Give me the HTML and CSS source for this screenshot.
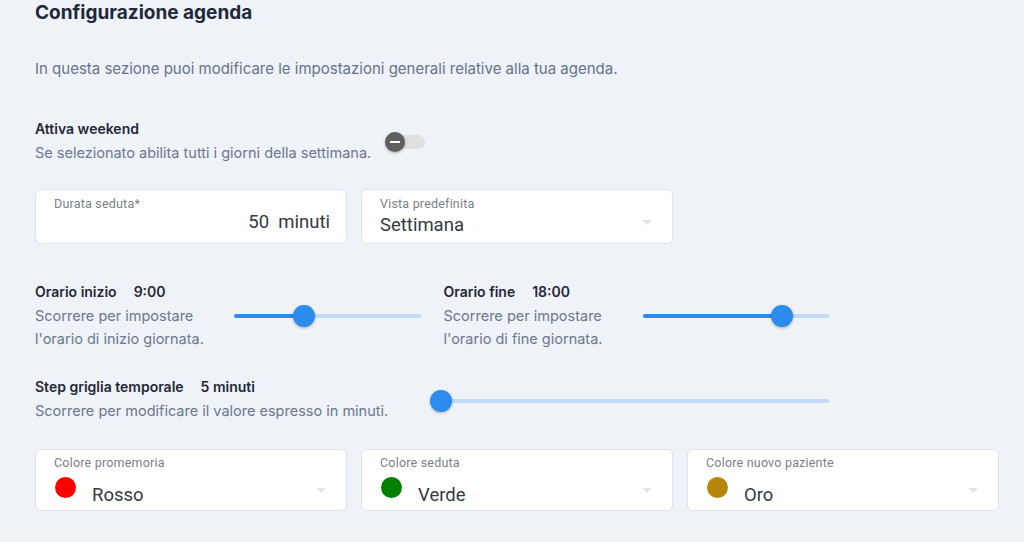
FILE: index.html
```html
<!DOCTYPE html>
<html>

<head>
	<meta charset="utf-8">
	<title>Configurazione agenda</title>
	<link rel="stylesheet" href="styles.css">
</head>

<body>
	<div id="page">
		<h1>Configurazione agenda</h1>
		<p class="intro">In questa sezione puoi modificare le impostazioni generali relative alla tua agenda.</p>

		<div class="weekend">
			<div>
				<div class="lbl">Attiva weekend</div>
				<div class="desc">Se selezionato abilita tutti i giorni della settimana.</div>
			</div>
			<div class="switch"><span class="knob"></span></div>
		</div>

		<div class="fields">
			<div class="field">
				<span class="flabel">Durata seduta*</span>
				<div class="fvalue right">50&nbsp;&nbsp;minuti</div>
			</div>
			<div class="field">
				<span class="flabel">Vista predefinita</span>
				<div class="fvalue">Settimana</div>
				<span class="arrow"></span>
			</div>
		</div>

		<div class="hours">
			<div class="hour">
				<div class="htext">
					<div class="lbl">Orario inizio<b>9:00</b></div>
					<div class="desc">Scorrere per impostare<br>l'orario di inizio giornata.</div>
				</div>
				<div class="slider">
					<div class="fill" style="width: 37.5%"></div>
					<span class="thumb" style="left: 37.5%"></span>
				</div>
			</div>
			<div class="hour">
				<div class="htext">
					<div class="lbl">Orario fine<b>18:00</b></div>
					<div class="desc">Scorrere per impostare<br>l'orario di fine giornata.</div>
				</div>
				<div class="slider">
					<div class="fill" style="width: 75%"></div>
					<span class="thumb" style="left: 75%"></span>
				</div>
			</div>
		</div>

		<div class="step">
			<div class="stext">
				<div class="lbl">Step griglia temporale<b>5 minuti</b></div>
				<div class="desc">Scorrere per modificare il valore espresso in minuti.</div>
			</div>
			<div class="slider">
				<div class="fill" style="width: 0%"></div>
				<span class="thumb" style="left: 0%"></span>
			</div>
		</div>

		<div class="colors">
			<div class="field tall">
				<span class="flabel">Colore promemoria</span>
				<div class="cvalue"><span class="dot red"></span>Rosso</div>
				<span class="arrow"></span>
			</div>
			<div class="field tall">
				<span class="flabel">Colore seduta</span>
				<div class="cvalue"><span class="dot green"></span>Verde</div>
				<span class="arrow"></span>
			</div>
			<div class="field tall">
				<span class="flabel">Colore nuovo paziente</span>
				<div class="cvalue"><span class="dot gold"></span>Oro</div>
				<span class="arrow"></span>
			</div>
		</div>
	</div>
</body>

</html>
```

FILE: styles.css
```css
body {
	margin: 0;
	background-color: #eff2f7;
	font-family: Inter, "Noto Sans", sans-serif;
	color: #1f2937;
}

#page {
	padding: 0 24px 0 35px;
}

h1 {
	margin: 0;
	font-size: 19px;
	line-height: 26px;
	font-weight: 700;
	color: #1e293b;
}

.intro {
	margin: 33px 0 0 0;
	font-size: 15px;
	line-height: 20px;
	color: #64748b;
}

.lbl {
	font-size: 14px;
	line-height: 20px;
	font-weight: 600;
	color: #1f2937;
	margin-bottom: 2px;
}

.lbl b {
	font-weight: 600;
	margin-left: 17px;
}

.desc {
	font-size: 14.5px;
	line-height: 23px;
	color: #6b7890;
}

.weekend {
	display: flex;
	align-items: center;
	gap: 14px;
	margin-top: 40px;
}

.switch {
	position: relative;
	width: 30px;
	height: 14px;
	margin-left: 10px;
	border-radius: 7px;
	background-color: #e0e0e0;
}

.knob {
	position: absolute;
	left: -10px;
	top: -3px;
	width: 20px;
	height: 20px;
	border-radius: 50%;
	background-color: #5f5f5f;
	box-shadow: 0 1px 3px rgba(0, 0, 0, 0.3);
}

.knob::after {
	content: "";
	position: absolute;
	left: 5px;
	top: 9px;
	width: 10px;
	height: 2px;
	background-color: #fff;
}

.fields {
	display: flex;
	gap: 14px;
	margin-top: 25px;
}

.field {
	position: relative;
	box-sizing: border-box;
	width: 312px;
	height: 55px;
	padding: 6px 16px 0 18px;
	background-color: #fff;
	border: 1px solid #dce3ec;
	border-radius: 6px;
	font-family: Roboto, "Noto Sans", sans-serif;
}

.flabel {
	display: block;
	font-size: 12.5px;
	line-height: 16px;
	color: #7b7f87;
	letter-spacing: 0.2px;
}

.fvalue {
	font-size: 18.5px;
	line-height: 26px;
	color: #333a44;
}

.fvalue.right {
	text-align: right;
	margin-top: -3px;
}

.arrow {
	position: absolute;
	right: 20px;
	top: 30px;
	border-left: 5px solid transparent;
	border-right: 5px solid transparent;
	border-top: 5px solid #e3e5e8;
}

.hours {
	display: flex;
	gap: 23px;
	width: 794px;
	margin-top: 38px;
}

.hour {
	display: flex;
	align-items: flex-start;
	width: 386px;
}

.htext {
	width: 199px;
	flex-shrink: 0;
}

.slider {
	position: relative;
	flex: 1;
	height: 4px;
	margin-top: 32px;
	border-radius: 2px;
	background-color: #bedcf8;
}

.fill {
	height: 4px;
	border-radius: 2px;
	background-color: #2c8cee;
}

.thumb {
	position: absolute;
	top: -9px;
	width: 22px;
	height: 22px;
	margin-left: -11px;
	border-radius: 50%;
	background-color: #2c8cee;
	box-shadow: 0 1px 3px rgba(0, 0, 0, 0.3);
}

.step {
	display: flex;
	align-items: flex-start;
	width: 794px;
	margin-top: 27px;
}

.stext {
	width: 406px;
	flex-shrink: 0;
}

.step .slider {
	margin-top: 22px;
}

.colors {
	display: flex;
	gap: 14px;
	margin-top: 27px;
}

.field.tall {
	height: 62px;
	padding-top: 5px;
}

.field.tall .arrow {
	top: 38px;
}

.cvalue {
	display: flex;
	align-items: flex-end;
	font-size: 18.5px;
	line-height: 22px;
	color: #333a44;
	margin-top: 6px;
}

.dot {
	width: 21px;
	height: 21px;
	border-radius: 50%;
	margin: 0 16px 8px 1px;
}

.red {
	background-color: #ff0000;
}

.green {
	background-color: #008000;
}

.gold {
	background-color: #b8860b;
}
```
